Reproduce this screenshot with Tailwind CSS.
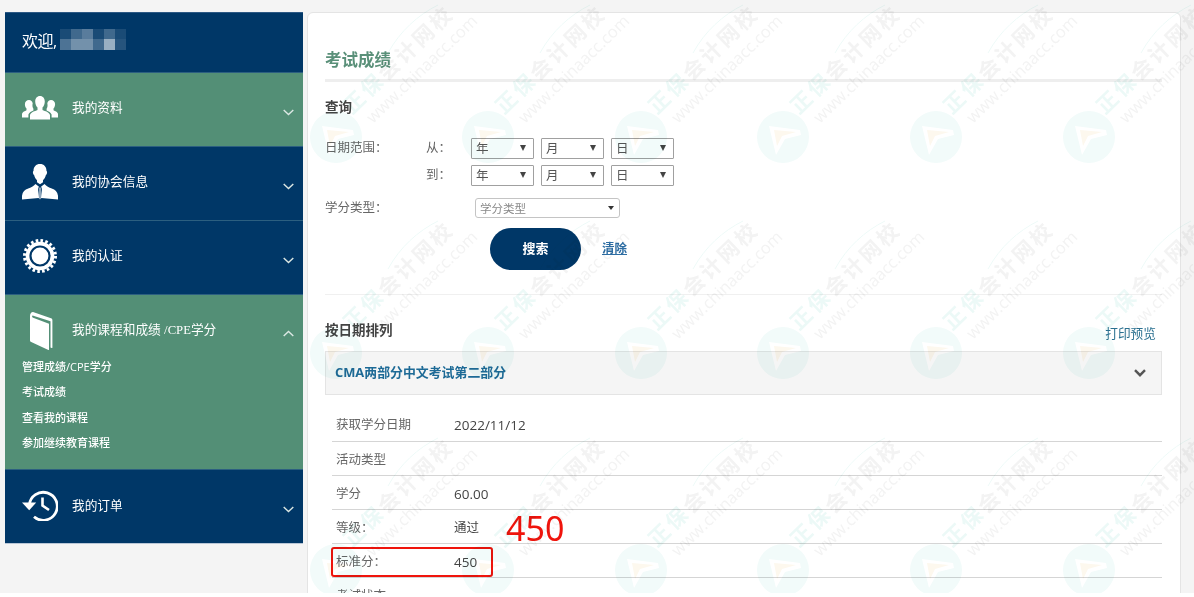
<!DOCTYPE html>
<html lang="zh-CN">
<head>
<meta charset="utf-8">
<title>考试成绩</title>
<script src="https://cdn.jsdelivr.net/npm/@tailwindcss/browser@4"></script>
</head>
<body class="bg-white overflow-hidden font-['Open_Sans','Noto_Sans_CJK_SC',sans-serif]">
<div class="relative h-[593px] overflow-hidden bg-[#f4f4f4] flex items-start pl-[5px] pt-3 gap-1">

  <!-- sidebar -->
  <aside class="w-[298px] shrink-0 text-white text-[12.7px] shadow-[0_1px_0_#b9c6d6]">
    <div class="h-[60px] bg-[#003767] flex items-center pl-[17px] pb-[7px] border-t border-[#2c5884]">
      <span class="text-[16px] tracking-[-0.5px] mt-[4px]">欢迎,</span>
      <span class="flex flex-col ml-[3px]" aria-hidden="true">
        <span class="flex h-[10px]">
          <i class="w-[11px] bg-white/10"></i><i class="w-[11px] bg-white/25"></i><i class="w-[11px] bg-white/35"></i><i class="w-[11px] bg-white/10"></i><i class="w-[11px] bg-white/25"></i><i class="w-[11px] bg-white/10"></i>
        </span>
        <span class="flex h-[11px]">
          <i class="w-[11px] bg-white/30"></i><i class="w-[11px] bg-white/45"></i><i class="w-[11px] bg-white/45"></i><i class="w-[11px] bg-white/25"></i><i class="w-[11px] bg-white/60"></i><i class="w-[11px] bg-white/15"></i>
        </span>
      </span>
    </div>

    <a class="h-[74px] bg-[#538f76] border-t border-[#2c5f80] flex items-center pl-[17px] pr-[9px]">
      <svg class="w-9 h-6 mb-[3px]" viewBox="0 0 36 24" fill="#fff"><path d="M18 0c3 0 4.800 2.400 4.800 5.600 0 2.600-1 4.700-2.300 6v2.400c2.700 1.200 6.700 2.100 7.500 5v4.500H8v-4.500c.8-2.900 4.800-3.800 7.500-5v-2.400c-1.300-1.300-2.300-3.400-2.300-6C13.200 2.400 15 0 18 0z"/><path d="M7 4c2 0 3.400 1.500 3.700 3.400-.5 1.700-.3 3.700.7 5.400v1.700c-2 .9-4.300 2-5 4.100v2.900H0v-3.800c.7-2 2.800-2.500 4.500-3.400v-1.700C3.500 11.600 2.900 10 2.900 8.200 2.900 5.700 4.600 4 7 4z"/><path d="M29 4c-2 0-3.400 1.500-3.700 3.400.5 1.700.3 3.700-.7 5.400v1.700c2 .9 4.300 2 5 4.100v2.900H36v-3.800c-.7-2-2.800-2.500-4.500-3.400v-1.700c1-1.200 1.600-2.800 1.600-4.600C33.100 5.700 31.400 4 29 4z"/></svg>
      <span class="ml-[14px] mb-[3px] flex-1">我的资料</span>
      <svg class="w-[11px] h-[7px] mt-[5px]" viewBox="0 0 11 7" fill="none" stroke="#dce8e4" stroke-width="1.400"><path d="M.7 1l4.800 4.600L10.300 1"/></svg>
    </a>

    <a class="h-[74px] bg-[#003767] border-t border-[#2c5f80] flex items-center pl-[17px] pr-[9px]">
      <svg class="w-9 h-[37px] mb-[3px]" viewBox="0 0 36 37" fill="#fff"><path d="M18 0c4 0 6.500 2.700 6.500 7 .5.300.7 1 .5 2-.2 1-.5 1.800-1.100 2-.6 2.300-1.800 4.300-2.900 5.300v2l-3 2-3-2v-2c-1.100-1-2.300-3-2.900-5.300-.6-.2-.9-1-1.100-2-.2-1 0-1.700.5-2C11.500 2.700 14 0 18 0z"/><path d="M13.500 20l3.500 2.700-1 1.800 1 9.500h-.3L0 35.500v-3.800c.6-4 2.800-6 6.200-7.200 2.800-1 5.300-2.300 7.300-4.500z"/><path d="M22.500 20L19 22.700l1 1.800-1 9.500h.3L36 35.500v-3.800c-.6-4-2.800-6-6.200-7.200-2.800-1-5.300-2.300-7.300-4.500z"/><path d="M17.300 23.500h1.400l.9 1.200-.7 1 .8 8.200-1.700 1.600-1.700-1.600.8-8.200-.7-1z" fill="#fff" opacity=".55"/></svg>
      <span class="ml-[14px] mb-[3px] flex-1">我的协会信息</span>
      <svg class="w-[11px] h-[7px] mt-[5px]" viewBox="0 0 11 7" fill="none" stroke="#dce8e4" stroke-width="1.400"><path d="M.7 1l4.800 4.600L10.300 1"/></svg>
    </a>

    <a class="h-[74px] bg-[#003767] border-t border-[#2c5f80] flex items-center pl-[17px] pr-[9px]">
      <svg class="w-9 h-9 mb-[3px]" viewBox="0 0 36 36" fill="none">
        <circle cx="18" cy="18" r="15.500" stroke="#fff" stroke-width="3" stroke-dasharray="2.600 2.270"/>
        <circle cx="18" cy="18" r="14.300" fill="#fff"/>
        <circle cx="18" cy="18" r="9.500" stroke="#003767" stroke-width="2.200"/>
      </svg>
      <span class="ml-[14px] mb-[3px] flex-1">我的认证</span>
      <svg class="w-[11px] h-[7px] mt-[5px]" viewBox="0 0 11 7" fill="none" stroke="#dce8e4" stroke-width="1.400"><path d="M.7 1l4.800 4.600L10.300 1"/></svg>
    </a>

    <div class="h-[175px] bg-[#538f76] border-t border-[#2c5f80]">
      <a class="flex items-center h-[60px] pl-[17px] pr-[9px] pt-[12px]">
        <svg class="w-9 h-[38px]" viewBox="0 0 36 38" fill="#fff"><path d="M11 0l18 6.300c1 .4 1.400 1 1.400 2v27.200c0 .5-.3.700-.7.500l-1.200-.5V9.300L11.300 3.700c-1.600-.5-1.600 1.500-.2 2.100l15.900 6v25.800c0 .4-.3.500-.6.400L9.200 30c-.8-.3-1.200-.8-1.200-1.600V4c0-2.200 1.100-4 3-4z"/></svg>
        <span class="ml-[14px] mb-[1px] flex-1">我的课程和成绩 <span class="font-['Liberation_Serif','Noto_Sans_CJK_SC',serif]">/CPE</span>学分</span>
        <svg class="w-[11px] h-[7px] mt-[5px]" viewBox="0 0 11 7" fill="none" stroke="#dce8e4" stroke-width="1.400"><path d="M.7 6l4.800-4.600L10.300 6"/></svg>
      </a>
      <ul class="pl-[17px] text-[11px] font-medium leading-[25.300px] -mt-[1px]">
        <li>管理成绩/CPE学分</li>
        <li>考试成绩</li>
        <li>查看我的课程</li>
        <li>参加继续教育课程</li>
      </ul>
    </div>

    <a class="h-[74px] bg-[#003767] border-t border-[#2c5f80] flex items-center pl-[17px] pr-[9px]">
      <svg class="w-9 h-8 mb-[3px]" viewBox="0 0 36 32" fill="none" stroke="#fff" stroke-width="2.800"><path d="M7.300 16A14 14 0 1 1 12 27.800"/><path d="M0 13.500h14.200l-7 7.800z" fill="#fff" stroke="none"/><path d="M20.500 8.500V16.500l6.500 4.500" stroke-width="2.600"/></svg>
      <span class="ml-[14px] mb-[1px] flex-1">我的订单</span>
      <svg class="w-[11px] h-[7px] mt-[5px]" viewBox="0 0 11 7" fill="none" stroke="#dce8e4" stroke-width="1.400"><path d="M.7 1l4.800 4.600L10.300 1"/></svg>
    </a>
  </aside>

  <!-- main card -->
  <main class="w-[874px] shrink-0 h-[640px] bg-white border border-[#e4e4e4] rounded-md pl-[17px] pr-[18px] pt-[36px] text-[12.500px] text-[#666]">
    <h1 class="text-[16.500px] font-bold text-[#5a9079] leading-[22px]">考试成绩</h1>
    <div class="h-[3px] bg-[#eeeeee] mt-[8px]"></div>
    <h2 class="text-[13.500px] font-bold text-[#444] leading-5 mt-[15px]">查询</h2>

    <div class="flex mt-[21px] h-[21px] items-center">
      <span class="w-[101px]">日期范围：</span>
      <span class="w-[45px]">从：</span>
      <div class="flex gap-[7px] text-[#555]">
        <div class="relative w-[63px] h-[21px] border border-[#a0a0a0] rounded-[1px] pl-1 leading-[19px]">年<span class="absolute right-[7px] top-[6px] border-x-[3.500px] border-t-[6px] border-x-transparent border-t-[#444]"></span></div>
        <div class="relative w-[63px] h-[21px] border border-[#a0a0a0] rounded-[1px] pl-1 leading-[19px]">月<span class="absolute right-[7px] top-[6px] border-x-[3.500px] border-t-[6px] border-x-transparent border-t-[#444]"></span></div>
        <div class="relative w-[63px] h-[21px] border border-[#a0a0a0] rounded-[1px] pl-1 leading-[19px]">日<span class="absolute right-[7px] top-[6px] border-x-[3.500px] border-t-[6px] border-x-transparent border-t-[#444]"></span></div>
      </div>
    </div>
    <div class="flex mt-[6px] h-[21px] items-center">
      <span class="w-[101px]"></span>
      <span class="w-[45px]">到：</span>
      <div class="flex gap-[7px] text-[#555]">
        <div class="relative w-[63px] h-[21px] border border-[#a0a0a0] rounded-[1px] pl-1 leading-[19px]">年<span class="absolute right-[7px] top-[6px] border-x-[3.500px] border-t-[6px] border-x-transparent border-t-[#444]"></span></div>
        <div class="relative w-[63px] h-[21px] border border-[#a0a0a0] rounded-[1px] pl-1 leading-[19px]">月<span class="absolute right-[7px] top-[6px] border-x-[3.500px] border-t-[6px] border-x-transparent border-t-[#444]"></span></div>
        <div class="relative w-[63px] h-[21px] border border-[#a0a0a0] rounded-[1px] pl-1 leading-[19px]">日<span class="absolute right-[7px] top-[6px] border-x-[3.500px] border-t-[6px] border-x-transparent border-t-[#444]"></span></div>
      </div>
    </div>
    <div class="flex mt-[11px] h-[21px] items-center">
      <span class="w-[150px] mt-[1px]">学分类型：</span>
      <div class="relative w-[145px] h-[20px] border border-[#c4c4c4] rounded-[3px] pl-1 leading-[19px] text-[#888] text-[11.500px]">学分类型<span class="absolute right-[5px] top-[7px] border-x-[3.500px] border-t-[4px] border-x-transparent border-t-[#333]"></span></div>
    </div>
    <div class="flex items-center mt-[10px] ml-[165px]">
      <button class="w-[91px] h-[42px] rounded-full bg-[#003767] text-white text-[13px] font-bold">搜索</button>
      <a class="ml-[21px] mt-[1px] text-[#2d6da3] underline font-bold text-[12.500px]">清除</a>
    </div>
    <div class="h-px bg-[#f0f0f0] mt-[24px]"></div>

    <div class="flex justify-between mt-[25px] h-[21px]">
      <h2 class="text-[13.500px] font-bold text-[#444] leading-5">按日期排列</h2>
      <a class="text-[#2a7090] text-[12.700px] mr-[6px] mt-[3px] leading-5">打印预览</a>
    </div>
    <div class="flex items-center justify-between h-[44px] mt-[10px] pl-[9px] pr-[15px] bg-[#f5f5f5] border border-[#e4e4e4]">
      <span class="text-[12.900px] font-bold text-[#1d6a96]">CMA两部分中文考试第二部分</span>
      <svg class="w-3 h-2" viewBox="0 0 12 8" fill="none" stroke="#555" stroke-width="2.400"><path d="M1 1.200l5 5 5-5"/></svg>
    </div>

    <dl class="ml-[7px] mt-[12px] relative">
      <div class="flex h-[34.500px] pt-[3px] items-center border-b border-[#d5d5d5] px-1"><dt class="w-[118px] mt-[1px]">获取学分日期</dt><dd class="text-[#444] text-[13.500px]">2022/11/12</dd></div>
      <div class="flex h-[34px] pt-[3px] items-center border-b border-[#d5d5d5] px-1"><dt class="w-[118px] mt-[1px]">活动类型</dt><dd></dd></div>
      <div class="flex h-[34.500px] pt-[3px] items-center border-b border-[#d5d5d5] px-1"><dt class="w-[118px] mt-[1px]">学分</dt><dd class="text-[#444] text-[13.500px]">60.00</dd></div>
      <div class="flex h-[34px] pt-[3px] items-center border-b border-[#d5d5d5] px-1"><dt class="w-[118px] mt-[1px]">等级：</dt><dd class="text-[#444]">通过</dd></div>
      <div class="flex h-[34px] pt-[3px] items-center border-b border-[#d5d5d5] px-1"><dt class="w-[118px]">标准分：</dt><dd class="text-[#444] text-[13.500px]">450</dd></div>
      <div class="flex h-[34px] pt-[3px] items-center px-1"><dt class="w-[118px]">考试状态</dt></div>
      <!-- screenshot annotations -->
      <div class="absolute left-[-1px] top-[140px] w-[162px] h-[30px] border-2 border-[#f0140c] rounded-[3px]"></div>
      <div class="absolute left-[174px] top-[101px] text-[#f0140c] text-[34px] leading-[40px] font-['Noto_Sans','Open_Sans',sans-serif]">450</div>
    </dl>
  </main>

  <!-- image watermark lying over the page -->
  <svg class="absolute inset-0 w-[1194px] h-[593px] pointer-events-none mix-blend-multiply" viewBox="0 0 1194 593" aria-hidden="true">
    <defs>
      <g id="wm">
        <path fill-rule="evenodd" fill="#f2fbfa" d="M-26 0a26 26 0 1 0 52 0a26 26 0 1 0-52 0zM-14-11L17-7l1 5L2 2l-9 16z"/>
        <path d="M-9-7L13-5-1-1-6 9z" fill="#fdf8ee"/>
        <path d="M52-84C64-106 82-122 102-132" fill="none" stroke="#eefaf8" stroke-width="1"/>
        <g transform="translate(16,-22) rotate(-44)">
          <text font-family="'Noto Sans CJK SC',sans-serif" font-size="21" font-weight="700" letter-spacing="3"><tspan fill="#ecf9f7">正保</tspan><tspan fill="#f3f3f3">会计网校</tspan></text>
        </g>
        <g transform="translate(37,-13) rotate(-44)">
          <text font-family="'Open Sans',sans-serif" font-size="16.500" fill="#f3f3f3">www.chinaacc.com</text>
        </g>
      </g>
    </defs>
    <use href="#wm" x="336" y="137"/><use href="#wm" x="488" y="137"/><use href="#wm" x="641" y="137"/><use href="#wm" x="783" y="137"/><use href="#wm" x="936" y="137"/><use href="#wm" x="1089" y="137"/>
    <use href="#wm" x="336" y="353"/><use href="#wm" x="488" y="353"/><use href="#wm" x="641" y="353"/><use href="#wm" x="783" y="353"/><use href="#wm" x="936" y="353"/><use href="#wm" x="1089" y="353"/>
    <use href="#wm" x="336" y="570"/><use href="#wm" x="488" y="570"/><use href="#wm" x="641" y="570"/><use href="#wm" x="783" y="570"/><use href="#wm" x="936" y="570"/><use href="#wm" x="1089" y="570"/>
  </svg>
</div>
</body>
</html>
